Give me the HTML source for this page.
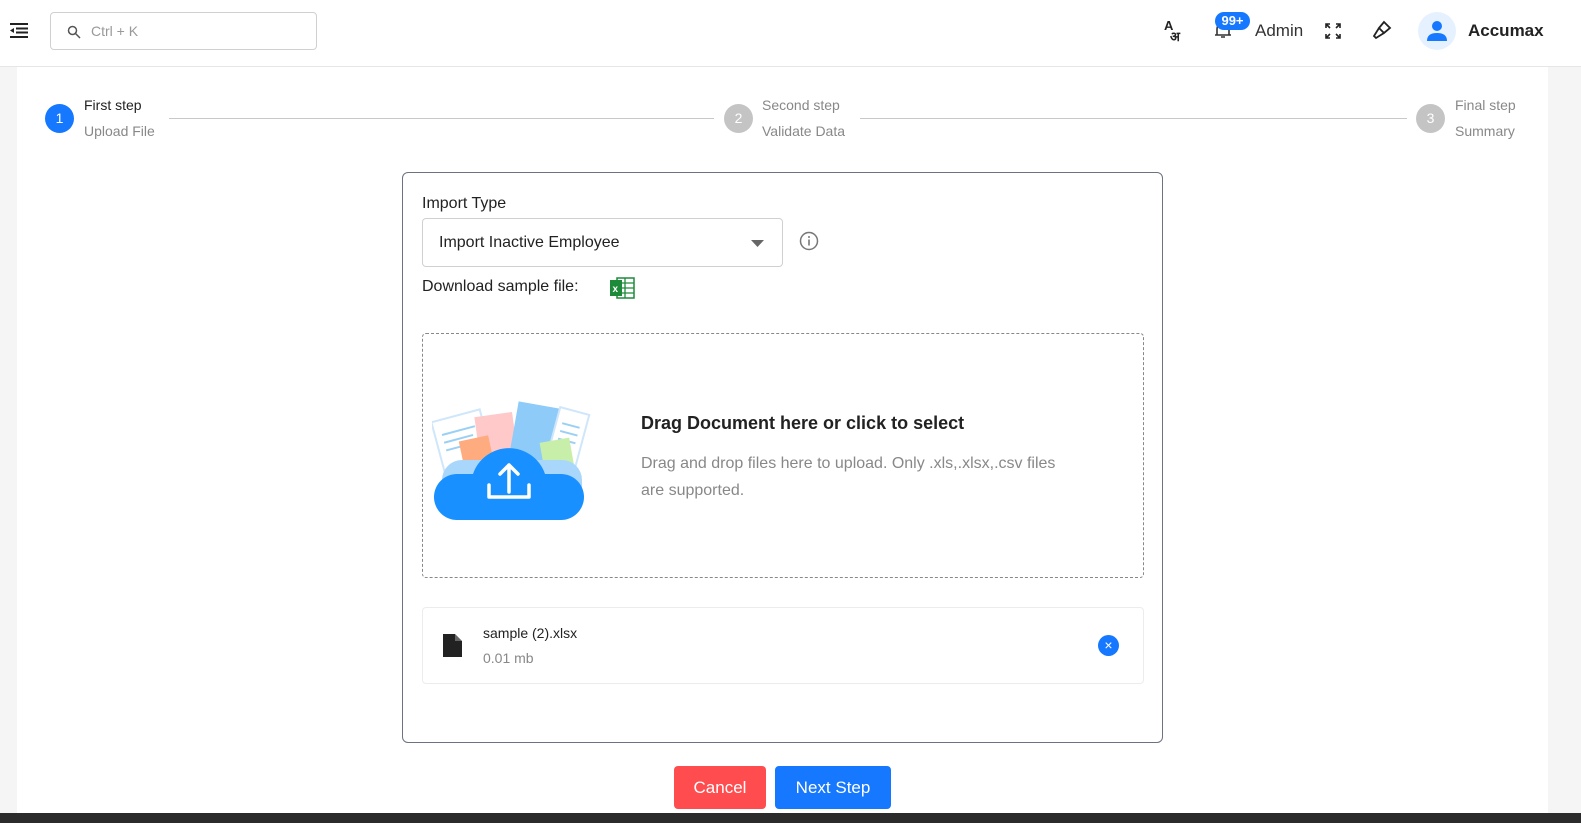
<!DOCTYPE html>
<html><head><meta charset="utf-8"><style>
*{box-sizing:border-box;margin:0;padding:0}
body{width:1581px;height:823px;overflow:hidden;background:#f5f5f5;font-family:"Liberation Sans",sans-serif;color:#222;position:relative}
.hdr{position:absolute;left:0;top:0;width:1581px;height:67px;background:#fff;border-bottom:1px solid #e6e6e6}
.main{position:absolute;left:17px;top:67px;width:1531px;height:746px;background:#fff}
.bottom{position:absolute;left:0;top:813px;width:1581px;height:10px;background:#2b2b2b}
.abs{position:absolute}
.search{left:50px;top:12px;width:267px;height:38px;border:1px solid #d0d0d0;border-radius:4px}
.circ{width:29px;height:29px;border-radius:50%;color:#fff;font-size:14px;text-align:center;line-height:29px}
.st1{font-size:14px;color:#222}
.st2{font-size:14px;color:#888}
.line{height:1px;background:#c8c8c8}
.card{left:402px;top:172px;width:761px;height:571px;border:1px solid #6b7280;border-radius:6px;background:#fff}
.sel{left:422px;top:218px;width:361px;height:49px;border:1px solid #d0d0d0;border-radius:4px;font-size:16px;padding:15px 16px}
.drop{left:422px;top:333px;width:722px;height:245px;border:1px dashed #888;border-radius:4px}
.file{left:422px;top:607px;width:722px;height:77px;border:1px solid #ececec;border-radius:4px}
.btn{top:766px;height:43px;border-radius:4px;color:#fff;font-size:17px;text-align:center;line-height:43px}
</style></head><body>
<div class="hdr">
 <svg class="abs" style="left:10px;top:23px" width="19" height="15" viewBox="0 0 19 15"><rect x="0" y="0" width="18" height="2" fill="#222"/><rect x="6" y="4.5" width="12" height="2" fill="#222"/><rect x="6" y="8.5" width="12" height="2" fill="#222"/><rect x="0" y="13" width="18" height="2" fill="#222"/><path d="M0 7.5 L4 5 L4 10Z" fill="#222"/></svg>
 <div class="abs search"><svg class="abs" style="left:16px;top:12px" width="14" height="14" viewBox="0 0 14 14"><circle cx="5.5" cy="5.5" r="4" fill="none" stroke="#555" stroke-width="1.5"/><path d="M8.5 8.5L13 13" stroke="#555" stroke-width="1.5"/></svg><span class="abs" style="left:40px;top:10px;font-size:14px;color:#999">Ctrl + K</span></div>
 <div class="abs" style="left:1164px;top:20px;font-size:13px;font-weight:bold;line-height:11px">A<br><span style="margin-left:6px">अ</span></div>
 <svg class="abs" style="left:1214px;top:20px" width="18" height="20" viewBox="0 0 18 20"><path d="M3 15V9a6 6 0 0112 0v6h2H1h2M7 17h4" fill="none" stroke="#333" stroke-width="1.6"/></svg>
 <div class="abs" style="left:1215px;top:12px;width:35px;height:18px;background:#1677ff;border-radius:9px;color:#fff;font-size:13px;text-align:center;line-height:18px;font-weight:bold">99+</div>
 <div class="abs" style="left:1255px;top:21px;font-size:17px;color:#333">Admin</div>
 <svg class="abs" style="left:1325px;top:23px" width="16" height="16" viewBox="0 0 16 16" fill="none" stroke="#222" stroke-width="1.6"><path d="M1 5V1h4M1 1l4 4M11 1h4v4M15 1l-4 4M1 11v4h4M1 15l4-4M15 11v4h-4M15 15l-4-4"/></svg>
 <svg class="abs" style="left:1372px;top:20px" width="22" height="20" viewBox="0 0 22 20" fill="none" stroke="#222" stroke-width="1.8"><path d="M12 2l6 6-6 5-5-5z M7 8l-5 8 2 2 8-5"/></svg>
 <div class="abs" style="left:1418px;top:12px;width:38px;height:38px;border-radius:50%;background:#e6f1ff"><svg class="abs" style="left:9px;top:8px" width="20" height="22" viewBox="0 0 20 22"><circle cx="10" cy="6" r="5" fill="#1677ff"/><path d="M0 21c0-6 4-8 10-8s10 2 10 8z" fill="#1677ff"/></svg></div>
 <div class="abs" style="left:1468px;top:21px;font-size:17px;font-weight:bold;color:#222">Accumax</div>
</div>
<div class="main"></div>
<div class="abs circ" style="left:45px;top:104px;background:#1677ff">1</div>
<div class="abs st1" style="left:84px;top:97px">First step</div>
<div class="abs st2" style="left:84px;top:123px">Upload File</div>
<div class="abs line" style="left:169px;top:118px;width:545px"></div>
<div class="abs circ" style="left:724px;top:104px;background:#c4c4c4">2</div>
<div class="abs st2" style="left:762px;top:97px">Second step</div>
<div class="abs st2" style="left:762px;top:123px">Validate Data</div>
<div class="abs line" style="left:860px;top:118px;width:547px"></div>
<div class="abs circ" style="left:1416px;top:104px;background:#c4c4c4">3</div>
<div class="abs st2" style="left:1455px;top:97px">Final step</div>
<div class="abs st2" style="left:1455px;top:123px">Summary</div>

<div class="abs card"></div>
<div class="abs" style="left:422px;top:195px;font-size:16px">Import Type</div>
<div class="abs sel">Import Inactive Employee<svg class="abs" style="left:328px;top:21px" width="13" height="7"><path d="M0 0h13L6.5 7z" fill="#666"/></svg></div>
<svg class="abs" style="left:799px;top:231px" width="20" height="20" viewBox="0 0 20 20"><circle cx="10" cy="10" r="8.5" fill="none" stroke="#777" stroke-width="1.5"/><rect x="9.2" y="8.5" width="1.6" height="6" fill="#777"/><circle cx="10" cy="6" r="1" fill="#777"/></svg>
<div class="abs" style="left:422px;top:278px;font-size:16px">Download sample file:</div>
<svg class="abs" style="left:610px;top:277px" width="25" height="22" viewBox="0 0 25 22"><rect x="7" y="1" width="17" height="20" fill="#fff" stroke="#1d8a3a" stroke-width="1.5"/><path d="M7 6h17M7 11h17M7 16h17M15 1v20" stroke="#1d8a3a" stroke-width="1.3"/><rect x="0" y="3" width="12" height="16" fill="#1d8a3a"/><text x="2.5" y="15" font-size="10" font-weight="bold" fill="#fff" font-family="Liberation Sans">x</text></svg>

<div class="abs drop"></div>
<svg class="abs" style="left:432px;top:400px" width="162" height="122" viewBox="0 0 162 122">
 <g transform="rotate(-15 30 40)"><rect x="5" y="15" width="50" height="60" fill="#fff" stroke="#cfe6fb" stroke-width="2"/><path d="M12 30h34M12 38h30M12 46h34" stroke="#9bd0f5" stroke-width="2"/></g>
 <rect x="45" y="15" width="38" height="45" fill="#ffc9c9" transform="rotate(-8 60 35)"/>
 <rect x="30" y="38" width="30" height="35" fill="#ffab80" transform="rotate(-12 45 55)"/>
 <rect x="82" y="5" width="48" height="55" fill="#8ecbf9" transform="rotate(10 105 30)"/>
 <g transform="rotate(15 135 40)"><rect x="120" y="10" width="30" height="55" fill="#fff" stroke="#cfe6fb" stroke-width="2"/><path d="M126 25h18M126 33h18M126 41h18" stroke="#9bd0f5" stroke-width="2"/></g>
 <rect x="110" y="40" width="30" height="35" fill="#c8efaa" transform="rotate(-10 125 55)"/>
 <rect x="10" y="60" width="140" height="55" rx="20" fill="#a9d6fb"/>
 <path d="M25 120 h104 a22 22 0 0 0 0 -46 h-16 a38 38 0 0 0 -72 0 h-16 a23 23 0 0 0 0 46z" fill="#1890ff"/>
 <path d="M77 92V65M68 74l9-9 9 9M57 85v12h40V85" fill="none" stroke="#fff" stroke-width="3.5" stroke-linecap="round" stroke-linejoin="round"/>
</svg>
<div class="abs" style="left:641px;top:413px;font-size:18px;font-weight:bold;color:#222">Drag Document here or click to select</div>
<div class="abs" style="left:641px;top:450px;width:430px;font-size:16px;line-height:27px;color:#888">Drag and drop files here to upload. Only .xls,.xlsx,.csv files are supported.</div>

<div class="abs file"></div>
<svg class="abs" style="left:443px;top:634px" width="19" height="23" viewBox="0 0 19 23"><path d="M0 0h12l7 7v16H0z" fill="#222"/><path d="M12 0v7h7" fill="#fff"/><path d="M12 0l7 7h-7z" fill="#666"/></svg>
<div class="abs" style="left:483px;top:625px;font-size:14px;color:#222">sample (2).xlsx</div>
<div class="abs" style="left:483px;top:650px;font-size:14px;color:#888">0.01 mb</div>
<div class="abs" style="left:1098px;top:635px;width:21px;height:21px;border-radius:50%;background:#1677ff;color:#fff;text-align:center;line-height:20px;font-size:14px">×</div>

<div class="abs btn" style="left:674px;width:92px;background:#ff4d4f">Cancel</div>
<div class="abs btn" style="left:775px;width:116px;background:#1677ff">Next Step</div>
<div class="bottom"></div>
</body></html>
